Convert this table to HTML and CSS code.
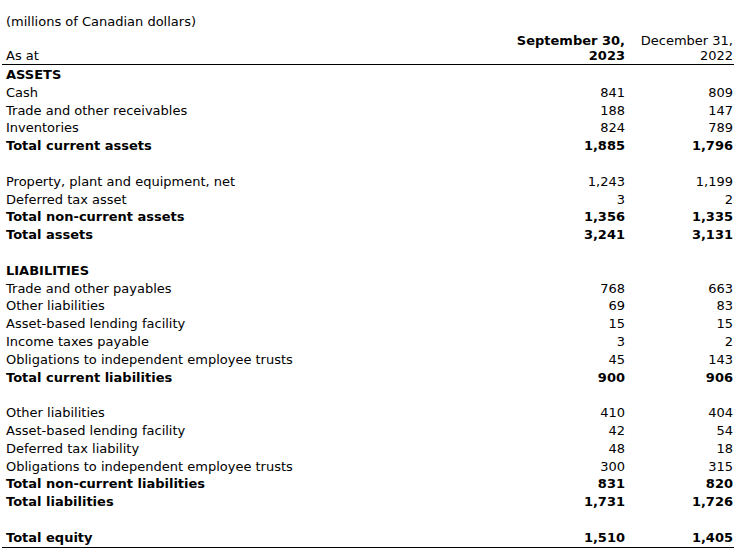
FILE: index.html
```html
<!DOCTYPE html>
<html>
<head>
<meta charset="utf-8">
<link rel="stylesheet" href="styles.css">
</head>
<body>
<div class="sheet">
  <div class="caption">(millions of Canadian dollars)</div>
  <table class="bs">
    <colgroup><col class="c-label"><col class="c-cur"><col class="c-prev"></colgroup>
    <thead>
      <tr><th class="label">As at</th><th class="num bold">September 30,<br>2023</th><th class="num">December 31,<br>2022</th></tr>
    </thead>
    <tbody>
      <tr class="total"><td class="label">ASSETS</td><td></td><td></td></tr>
      <tr><td class="label">Cash</td><td class="num">841</td><td class="num">809</td></tr>
      <tr><td class="label">Trade and other receivables</td><td class="num">188</td><td class="num">147</td></tr>
      <tr><td class="label">Inventories</td><td class="num">824</td><td class="num">789</td></tr>
      <tr class="total"><td class="label">Total current assets</td><td class="num">1,885</td><td class="num">1,796</td></tr>
      <tr class="blank"><td colspan="3">&nbsp;</td></tr>
      <tr><td class="label">Property, plant and equipment, net</td><td class="num">1,243</td><td class="num">1,199</td></tr>
      <tr><td class="label">Deferred tax asset</td><td class="num">3</td><td class="num">2</td></tr>
      <tr class="total"><td class="label">Total non-current assets</td><td class="num">1,356</td><td class="num">1,335</td></tr>
      <tr class="total"><td class="label">Total assets</td><td class="num">3,241</td><td class="num">3,131</td></tr>
      <tr class="blank"><td colspan="3">&nbsp;</td></tr>
      <tr class="total"><td class="label">LIABILITIES</td><td></td><td></td></tr>
      <tr><td class="label">Trade and other payables</td><td class="num">768</td><td class="num">663</td></tr>
      <tr><td class="label">Other liabilities</td><td class="num">69</td><td class="num">83</td></tr>
      <tr><td class="label">Asset-based lending facility</td><td class="num">15</td><td class="num">15</td></tr>
      <tr><td class="label">Income taxes payable</td><td class="num">3</td><td class="num">2</td></tr>
      <tr><td class="label">Obligations to independent employee trusts</td><td class="num">45</td><td class="num">143</td></tr>
      <tr class="total"><td class="label">Total current liabilities</td><td class="num">900</td><td class="num">906</td></tr>
      <tr class="blank"><td colspan="3">&nbsp;</td></tr>
      <tr><td class="label">Other liabilities</td><td class="num">410</td><td class="num">404</td></tr>
      <tr><td class="label">Asset-based lending facility</td><td class="num">42</td><td class="num">54</td></tr>
      <tr><td class="label">Deferred tax liability</td><td class="num">48</td><td class="num">18</td></tr>
      <tr><td class="label">Obligations to independent employee trusts</td><td class="num">300</td><td class="num">315</td></tr>
      <tr class="total"><td class="label">Total non-current liabilities</td><td class="num">831</td><td class="num">820</td></tr>
      <tr class="total"><td class="label">Total liabilities</td><td class="num">1,731</td><td class="num">1,726</td></tr>
      <tr class="blank"><td colspan="3">&nbsp;</td></tr>
      <tr class="total final"><td class="label">Total equity</td><td class="num">1,510</td><td class="num">1,405</td></tr>
    </tbody>
  </table>
</div>
</body>
</html>
```

FILE: styles.css
```css
html, body {
  margin: 0;
  padding: 0;
  background: #fff;
}
body {
  font-family: "DejaVu Sans", Verdana, sans-serif;
  font-size: 13px;
  color: #000;
}
.sheet {
  padding: 13px 0 0 2px;
  width: 732px;
}
.caption {
  line-height: 18px;
  padding-left: 4px;
}
.bs {
  width: 732px;
  border-collapse: collapse;
  table-layout: fixed;
}
.c-label { width: 510px; }
.c-cur { width: 114px; }
.c-prev { width: 108px; }
.bs th, .bs td {
  padding: 0;
  white-space: nowrap;
}
.bs th {
  font-weight: normal;
  line-height: 15px;
  padding-top: 2px;
  padding-bottom: 1px;
  vertical-align: bottom;
  border-bottom: 1px solid #000;
}
.bs th.bold { font-weight: bold; }
.bs td {
  line-height: 15.8px;
  padding-top: 2px;
  height: 15.8px;
  vertical-align: top;
}
.label {
  text-align: left;
  padding-left: 4px !important;
}
.num {
  text-align: right;
  padding-right: 1px !important;
}
.total td { font-weight: bold; }
.final td { border-bottom: 1px solid #000; padding-bottom: 1px; }
```
